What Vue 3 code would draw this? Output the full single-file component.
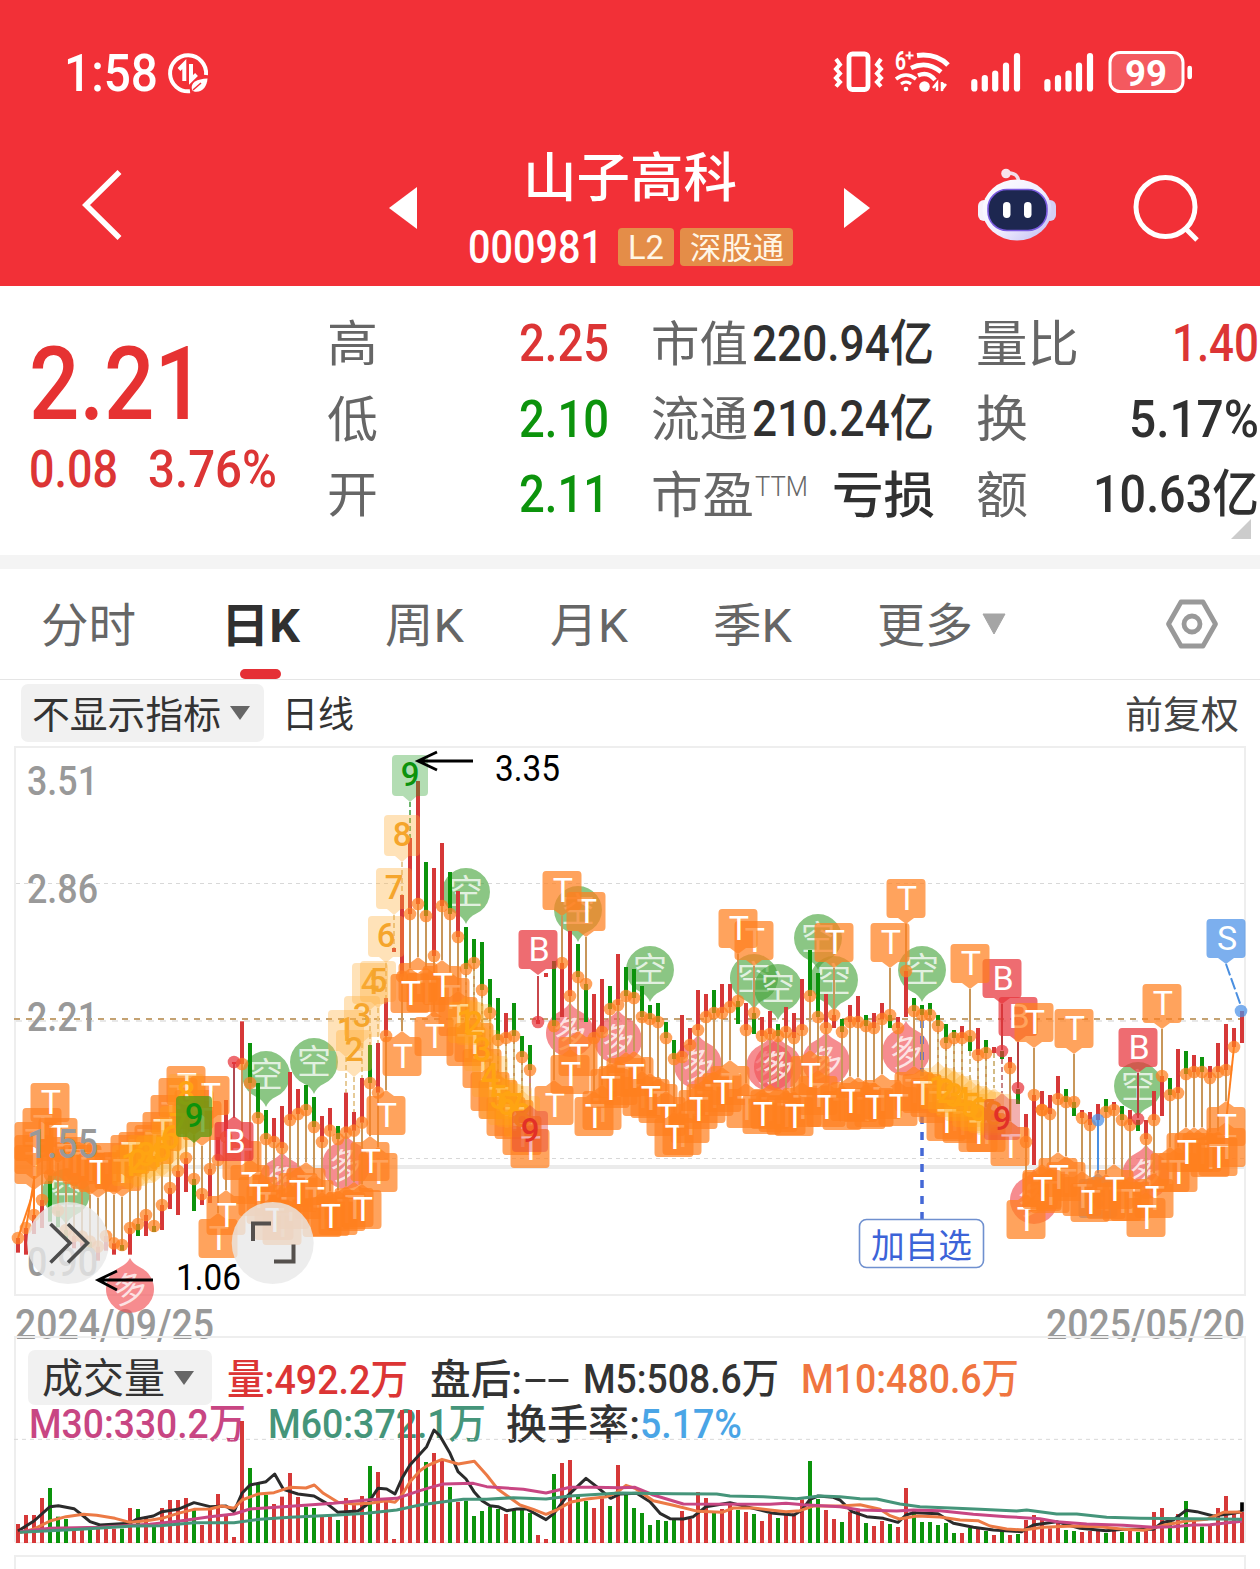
<template>
  <div class="page">
    <header class="header">
      <div class="status">
        <FitText t="1:58" :w="94" :s="51" class="medium" />
        <svg class="saver" width="40" height="40" viewBox="0 0 40 40" fill="none" stroke="#fff">
          <path d="M22 38.2A18 18 0 1 1 38 22" stroke-width="4" />
          <path d="M11 16.500L16.300 11V28M23 11V27L28.500 21.500" stroke-width="4" />
          <path d="M24 37C22 29 29 26 39.5 25.5C39 34 34 40 26 38.5Z" fill="#fff" stroke="none" />
          <path d="M25 37L33 30" stroke="#f23037" stroke-width="1.500" />
        </svg>
        <svg class="signals" width="360" height="46" viewBox="834 49 360 46" fill="none" stroke="#fff">
          <rect x="849" y="54" width="19" height="35.500" rx="3.500" stroke-width="4.800" />
          <path d="M836 59l4 5.500-4 4.500 4 4.500-4 4.500 4 4-4 4.500M881 59l-4 5.500 4 4.500-4 4.500 4 4.500-4 4 4 4.500" stroke-width="4" />
          <text x="895" y="70" font-size="26" font-weight="700" fill="#fff" stroke="none" textLength="11" lengthAdjust="spacingAndGlyphs">6</text>
          <path d="M905.500 55.500h8M909.500 51.500v8" stroke-width="2.200" />
          <path d="M917 55.500Q936 53 948 65" stroke-width="5" />
          <path d="M911 68Q927 60 941 72" stroke-width="4.600" />
          <path d="M918 75.500Q928 71 935 80" stroke-width="4.200" />
          <path d="M896 79Q906 71 916 79" stroke-width="3.600" />
          <path d="M901 84Q906 80 911 84" stroke-width="3" />
          <circle cx="906" cy="89" r="2.300" fill="#fff" stroke="none" />
          <circle cx="924.500" cy="86.500" r="5.300" fill="#fff" stroke="none" />
          <path d="M933 88l4-5v8M942 91v-9M943 83v5l3-4" stroke-width="2.500" />
          <path
            v-for="(b, n) in signalBars" :key="n"
            :d="`M${b[0]} ${b[1]}V88.500`" stroke-width="6.200" stroke-linecap="round"
          />
          <rect x="1110" y="52.500" width="73" height="39" rx="10" fill="#ffffff" fill-opacity=".2" stroke-width="3" />
          <path d="M1189.700 68v9" stroke-width="4.600" stroke-linecap="round" />
          <text x="1125" y="85.500" font-size="37" font-weight="700" fill="#fff" stroke="none" textLength="42" lengthAdjust="spacingAndGlyphs">99</text>
        </svg>
      </div>
      <nav class="nav">
        <svg class="back" width="40" height="72" viewBox="0 0 40 72">
          <path d="M38.500 3L5 36L38.500 69" fill="none" stroke="#fff" stroke-width="5.600" />
        </svg>
        <svg class="prev" width="28" height="42" viewBox="0 0 28 42"><path d="M28 0V42L0 21Z" fill="#fff" /></svg>
        <div class="stock">
          <FitText t="山子高科" :w="212" :s="53" class="medium" />
          <div class="code">
            <FitText t="000981" :w="135" :s="46" class="medium" />
            <span class="badge l2"><FitText t="L2" :w="36" :s="34" /></span>
            <span class="badge sgt"><FitText t="深股通" :w="92" :s="31" /></span>
          </div>
        </div>
        <svg class="next" width="27" height="42" viewBox="0 0 27 42"><path d="M0 1V41L26 21Z" fill="#fff" /></svg>
        <svg class="robot" width="80" height="74" viewBox="0 0 80 74">
          <defs>
            <linearGradient id="head" x1="0" y1="0" x2="1" y2="1">
              <stop offset="0" stop-color="#fff" />
              <stop offset=".55" stop-color="#f0edff" />
              <stop offset="1" stop-color="#bcb8f2" />
            </linearGradient>
          </defs>
          <path d="M30 5Q41 4 42 15" fill="none" stroke="#f1dcea" stroke-width="3.500" />
          <circle cx="29" cy="5.500" r="4.800" fill="#f8e3ec" />
          <rect x="1" y="32" width="12" height="21" rx="6" fill="#f5f0fb" />
          <rect x="67" y="32" width="12" height="21" rx="6" fill="#d4cff5" />
          <ellipse cx="40" cy="42" rx="34.500" ry="30.500" fill="url(#head)" />
          <rect x="11" y="21.500" width="59" height="41" rx="19" fill="#1d2750" stroke="#7b5be0" stroke-width="1.600" />
          <rect x="26" y="34" width="7.500" height="16" rx="3.700" fill="#fff" />
          <rect x="47" y="34" width="7.500" height="16" rx="3.700" fill="#fff" />
        </svg>
        <svg class="search" width="68" height="68" viewBox="0 0 68 68" fill="none" stroke="#fff" stroke-width="5">
          <circle cx="33.500" cy="33" r="29.500" />
          <path d="M54 55L65 66" />
        </svg>
      </nav>
    </header>

    <section class="quote">
      <div class="price">
        <FitText t="2.21" :w="176" :s="102" class="medium last" />
        <div class="change">
          <FitText t="0.08" :w="89" :s="51" class="medium" />
          <FitText t="3.76%" :w="129" :s="51" class="medium" />
        </div>
      </div>
      <div class="col c1">
        <div v-for="r in col1" :key="r.k" class="row">
          <FitText :t="r.k" :w="49" :s="49" class="label" />
          <FitText :t="r.v" :w="90" :s="51" class="medium" :class="r.c" />
        </div>
      </div>
      <div class="col c2">
        <div class="row"><FitText t="市值" :w="95" :s="48" class="label" /><FitText t="220.94亿" :w="182" :s="50" class="medium dark" /></div>
        <div class="row"><FitText t="流通" :w="95" :s="48" class="label" /><FitText t="210.24亿" :w="182" :s="50" class="medium dark" /></div>
        <div class="row">
          <span class="pe"><FitText t="市盈" :w="101" :s="50" class="label" /><FitText t="TTM" :w="53" :s="27" class="ttm" /></span>
          <FitText t="亏损" :w="101" :s="50" class="medium dark" />
        </div>
      </div>
      <div class="col c3">
        <div class="row"><FitText t="量比" :w="101" :s="50" class="label" /><FitText t="1.40" :w="87" :s="51" class="medium red" /></div>
        <div class="row"><FitText t="换" :w="50" :s="50" class="label" /><FitText t="5.17%" :w="130" :s="51" class="medium dark" /></div>
        <div class="row"><FitText t="额" :w="50" :s="50" class="label" /><FitText t="10.63亿" :w="166" :s="51" class="medium dark" /></div>
      </div>
      <svg class="corner" width="20" height="20"><path d="M20 0V20H0Z" fill="#ccc" /></svg>
    </section>

    <nav class="tabs">
      <div v-for="tab in tabs" :key="tab.t" class="tab" :class="{ active: tab.on }">
        <FitText :t="tab.t" :w="tab.w" :s="47" />
      </div>
      <svg class="more" width="24" height="21"><path d="M1 0H23L12 20Z" fill="#a5a5a5" stroke="#a5a5a5" stroke-linejoin="round" /></svg>
      <svg class="setting" width="52" height="50" viewBox="0 0 52 50" fill="none" stroke="#999" stroke-width="4.800" stroke-linejoin="round">
        <path d="M15 3H37L49.500 25L37 47H15L2.500 25Z" />
        <circle cx="26" cy="25" r="8" />
      </svg>
    </nav>

    <div class="toolbar">
      <div class="pill">
        <FitText t="不显示指标" :w="187" :s="37.500" />
        <svg width="20" height="14"><path d="M0 0H20L10 14Z" fill="#666" /></svg>
      </div>
      <FitText t="日线" :w="70" :s="37" class="period" />
      <FitText t="前复权" :w="112" :s="38" class="adjust" />
    </div>

    <svg class="kline" width="1260" height="549" viewBox="0 746 1260 549">
      <path d="M15 1295V747H1245V1295Z" fill="none" stroke="#eee" stroke-width="2" />
      <path d="M16 883.500H1244M16 1158.500H1244" stroke="#d8d8d8" stroke-dasharray="4 4" />
      <path d="M16 1167H1244" stroke="#ebebeb" stroke-width="4" />
      <path d="M16 1021H1244" stroke="#e8e8e8" stroke-width="2" stroke-dasharray="6 6" />
      <path d="M14 1019H1244" stroke="#c4a272" stroke-width="2" stroke-dasharray="6 6" />

      <g v-for="(p, n) in pins" :key="'p' + n" :transform="`translate(${p[1]} ${p[2]})`">
        <g v-if="p[0] === 'down'">
          <path d="M-10 21.800Q-3 25 0 32Q3 25 10 21.800A24 24 0 1 0 -10 21.800Z" fill="#43a338" fill-opacity=".62" />
          <text y="12" class="pin">空</text>
        </g>
        <g v-else>
          <path d="M-10 -21.800Q-3 -25 0 -31Q3 -25 10 -21.800A24 24 0 1 1 -10 -21.800Z" fill="#f2555a" fill-opacity=".68" />
          <text y="12" class="pin" transform="rotate(-14)">多</text>
        </g>
      </g>

      <path d="M922 1020V1219" stroke="#4468d6" stroke-width="3.500" stroke-dasharray="8 8" />

      <path v-for="(s, n) in stems" :key="'s' + n" :d="s.d" :stroke="s.c" stroke-width="2" :stroke-dasharray="s.dash" />
      <path v-for="(c, n) in candles" :key="'c' + n" :d="`M${c.x} ${c.hi}V${c.lo}`" :stroke="c.color" stroke-width="4" />
      <circle v-for="(d, n) in dots" :key="'d' + n" :cx="d.x" :cy="d.y" r="6.300" :fill="d.c" fill-opacity=".72" />

      <g v-for="(m, n) in numbers" :key="'n' + n" :transform="`translate(${xOf(m.i)} ${m.y})`">
        <path :d="m.up ? countDown : countUp" :fill="m.fill" :fill-opacity="m.o" />
        <text y="31" class="count" :fill="m.ink">{{ m.t }}</text>
      </g>
      <g v-for="(m, n) in tags" :key="'t' + n" :transform="`translate(${m.x} ${m.y})`">
        <path :d="m.up ? tagDown : tagUp" :fill="m.fill" fill-opacity=".72" />
        <text x="1" y="31" class="tag">{{ m.t }}</text>
      </g>
      <g v-for="(m, n) in lateNumbers" :key="'l' + n" :transform="`translate(${xOf(m.i)} ${m.y})`">
        <path :d="m.up ? countDown : countUp" :fill="m.fill" :fill-opacity="m.o" />
        <text y="31" class="count" :fill="m.ink">{{ m.t }}</text>
      </g>

      <text
        v-for="a in axis" :key="a.t" x="27" :y="a.y + 14.300" class="axis"
        textLength="71" lengthAdjust="spacingAndGlyphs"
      >{{ a.t }}</text>

      <path d="M473 761H419M437 752L418 761L437 770" fill="none" stroke="#000" stroke-width="2.800" />
      <text x="495" y="781" class="mark" textLength="65" lengthAdjust="spacingAndGlyphs">3.35</text>
      <text x="176" y="1290" class="mark" textLength="65" lengthAdjust="spacingAndGlyphs">1.06</text>

      <rect x="859.500" y="1219.500" width="124" height="48" rx="7" fill="#fff" stroke="#6f90cf" stroke-width="1.600" />
      <text x="871" y="1257.500" class="watch" textLength="101" lengthAdjust="spacingAndGlyphs">加自选</text>

      <circle cx="68" cy="1243" r="41" fill="#e9e9e9" fill-opacity=".8" />
      <path d="M50.500 1224L70 1243L50.500 1262.500M68 1224L87.500 1243L68 1262.500" fill="none" stroke="#4d4d4d" stroke-width="3.600" />
      <circle cx="272.700" cy="1243" r="41" fill="#e9e9e9" fill-opacity=".8" />
      <path d="M253 1241V1223.500H271M293.500 1244.500V1261.500H274" fill="none" stroke="#55504d" stroke-width="4" />
      <path d="M153 1280H99M117 1271L98 1280L117 1290" fill="none" stroke="#000" stroke-width="2.800" />
    </svg>

    <div class="dates">
      <FitText t="2024/09/25" :w="199" :s="42" />
      <FitText t="2025/05/20" :w="199" :s="42" />
    </div>

    <section class="volume">
      <div class="legend first">
        <div class="pill vol-pill">
          <FitText t="成交量" :w="121" :s="40.500" />
          <svg width="20" height="14"><path d="M0 0H20L10 14Z" fill="#666" /></svg>
        </div>
        <FitText t="量:492.2万" :w="181" :s="41" class="medium red" />
        <FitText t="盘后:" :w="92" :s="41" class="after medium" />
        <FitText t="--" :w="46" :s="41" class="empty" />
        <FitText t="M5:508.6万" :w="196" :s="41" class="medium m5" />
        <FitText t="M10:480.6万" :w="218" :s="41" class="medium m10" />
      </div>
      <div class="legend second">
        <FitText t="M30:330.2万" :w="217" :s="41" class="medium m30" />
        <FitText t="M60:372.1万" :w="218" :s="41" class="medium m60" />
        <FitText t="换手率:" :w="134" :s="41" class="rate medium" />
        <FitText t="5.17%" :w="102" :s="41" class="medium pct" />
      </div>
      <svg class="bars" width="1260" height="239" viewBox="0 0 3780 717">
        <path d="M42 21H3738M45 21V636M3735 21V636M42 678H3738M45 678V717M3735 678V717" stroke="#eee" stroke-width="6" fill="none" />
        <path d="M42 328H3735" stroke="#d8d8d8" stroke-width="3" stroke-dasharray="12 12" />
        <path d="M45 638H3735" stroke="#f6e6e4" stroke-width="4" />
        <path v-for="(v, n) in volumes" :key="n" :d="`M${54 + 24 * n} ${v.top}V639`" :stroke="v.color" stroke-width="12" />
        <polyline v-for="l in averages" :key="l.c" :points="l.p" fill="none" :stroke="l.c" stroke-width="9" stroke-linejoin="round" />
        <path d="M3726 517V545" stroke="#000" stroke-width="11" />
      </svg>
    </section>
  </div>
</template>

<script setup>
import { h } from 'vue'

const RED = '#d63838'
const GREEN = '#0c930c'
const ORANGE = '#ff7f1e'

// 文字按指定宽度排布, 中文开头的略微下移并抵消字形留白
const FitText = (props) => {
  const cjk = /^[\u4e00-\u9fff]/.test(props.t)
  const pure = /^[\u4e00-\u9fff]+$/.test(props.t)
  return h('svg', { width: props.w, height: props.s, viewBox: `0 0 ${props.w} ${props.s}`, class: 'fit' }, [
    h('text', {
      x: pure ? -1 : 0,
      y: props.s * (cjk ? 0.87 : 0.855),
      'font-size': props.s,
      fill: 'currentColor',
      textLength: props.w + (pure ? 2 : 0),
      lengthAdjust: 'spacingAndGlyphs'
    }, props.t)
  ])
}
FitText.props = ['t', 'w', 's']

const signalBars = [
  [974.3, 82], [984.8, 78], [995.2, 73.5], [1006, 65.5], [1017, 56],
  [1047.4, 82], [1058, 78], [1068.5, 73.5], [1079, 65.5], [1090, 56]
]

const col1 = [
  { k: '高', v: '2.25', c: 'red' },
  { k: '低', v: '2.10', c: 'green' },
  { k: '开', v: '2.11', c: 'green' }
]

const tabs = [
  { t: '分时', w: 93 },
  { t: '日K', w: 79, on: true },
  { t: '周K', w: 79 },
  { t: '月K', w: 78 },
  { t: '季K', w: 79 },
  { t: '更多', w: 94 }
]

const axis = [
  { t: '3.51', y: 780.5 },
  { t: '2.86', y: 888.5 },
  { t: '2.21', y: 1016.5 },
  { t: '1.55', y: 1143.5 },
  { t: '0.90', y: 1262 }
]

// 气泡方框, 尖角朝下/朝上
const tagDown = 'M-16 0H16Q19.500 0 19.500 4V35Q19.500 39 16 39H8L0 45L-8 39H-16Q-19.500 39 -19.500 35V4Q-19.500 0 -16 0Z'
const tagUp = 'M-16 0H-8L0 -6L8 0H16Q19.500 0 19.500 4V35Q19.500 39 16 39H-16Q-19.500 39 -19.500 35V4Q-19.500 0 -16 0Z'
const countDown = 'M-14 0H14Q18 0 18 4V37Q18 41 14 41H7L0 47L-7 41H-14Q-18 41 -18 37V4Q-18 0 -14 0Z'
const countUp = 'M-14 0H-7L0 -6L7 0H14Q18 0 18 4V37Q18 41 14 41H-14Q-18 41 -18 37V4Q-18 0 -14 0Z'

const xOf = (i) => 18 + 8 * i
const colorOf = (s) => (s[0] === 'r' ? RED : GREEN)

// 每根K线: 颜色 + 高_低, 以三分之一像素为单位
const seg = (base, text) =>
  text.trim().split(/\s+/).map((s) => {
    const [hi, lo] = s.slice(1).split('_').map(Number)
    return { color: colorOf(s), hi: base + hi / 3, lo: base + lo / 3 }
  })

const candles = [
  ...seg(1030, `r624_668 r594_674 r555_612 r510_594 g435_575 g542_592 g600_630 r618_655 r620_650 g635_660
    r650_692 r618_662 r640_674 g645_662 r594_674 g582_618 r555_618 g588_606 r525_600 r474_537
    r423_555 r384_486 g447_543 r492_525 r417_519 r321_390 r210_321 r96_102 r-26_102 g39_159
    g159_264 g240_327 r264_336 r228_354 r126_270 r177_252 g165_240 g201_291 r258_336`),
  ...seg(740, `r1104_1172 g1158_1197 r1058_1178 r1116_1172 r1014_1148 g915_1029 r909_1058 r774_888 r624_636
    r465_710 r294_522 r123_492 g366_528 r384_648 r309_498 g396_522 r453_591 g561_687 g597_669
    g606_750 g717_819 g774_900 r819_894 g789_888 g888_951 g915_990 r840_852 r699_711 g663_858
    r669_831 r573_768 g612_711 g732_846 r762_894 r717_876 g738_807 r642_795 g681_768`),
  ...seg(860, `g327_414 g378_471 g435_477 g429_486 g486_534 g540_597 r465_591 r504_555 r390_510 r402_471
    g390_459 r372_459 r372_441 g423_492 r429_510 g459_522 r471_528 r453_522 g492_528 r441_516
    r459_534 r357_510 g270_408 g339_471 r402_504 r465_504 g477_516 r435_486 r408_486 g465_498
    r459_504 r429_477 g465_504 r471_504 r333_471 g414_453 g435_465 g429_465 g465_498 g492_549
    g510_534 r498_534 g528_573 r504_585 g540_579 r561_579 g573_597 r591_624 g687_732 r762_846
    r705_915 r693_750 r705_762 r648_717 g687_726 g726_768 r750_774 r756_795 r732_780 g717_756
    r726_750 g738_780 r750_795 g780_813 r780_837 r693_780 r648_768 g654_705 r567_699 g573_642
    r585_636 g591_636 r618_654 r549_636 r492_630 r504_561 r453_549`)
].map((c, i) => ({ ...c, x: xOf(i) }))

// 标记: [K线序号, 方框顶部]
const above = [
  [0, 1145], [1, 1135], [2, 1122], [3, 1108], [5, 1118], [6, 1137], [7, 1142], [8, 1145], [9, 1150],
  [11, 1143], [12, 1150], [15, 1132], [16, 1122], [17, 1125], [19, 1095], [20, 1078], [22, 1090], [23, 1101],
  [4, 1083], [10, 1153], [13, 1152], [14, 1135], [18, 1112], [21, 1066], [24, 1076],
  [71, 892], [68, 871], [92, 921], [90, 909], [102, 923], [109, 923], [111, 879], [119, 944],
  [127, 1003], [132, 1009], [143, 984]
]
const below = [
  [28, 1141], [29, 1165], [31, 1185], [33, 1206], [34, 1190], [36, 1168], [37, 1180], [38, 1198], [40, 1196],
  [41, 1192], [42, 1188], [45, 1153], [50, 963], [51, 973], [54, 978], [55, 997], [56, 1027], [58, 1049],
  [59, 1072], [60, 1080], [61, 1097], [62, 1100], [63, 1116], [64, 1129], [73, 1091], [75, 1066], [76, 1058],
  [78, 1077], [80, 1084], [83, 1116], [84, 1104], [86, 1084], [87, 1077], [89, 1066], [91, 1089], [94, 1090],
  [95, 1093], [96, 1096], [98, 1088], [100, 1076], [103, 1091], [105, 1083], [106, 1090], [108, 1080],
  [112, 1072], [114, 1078], [115, 1084], [117, 1100], [118, 1104], [121, 1113], [128, 1172], [131, 1162],
  [133, 1177], [136, 1180], [138, 1182], [139, 1182], [144, 1153], [147, 1133], [148, 1133],
  [149, 1138], [152, 1128],
  [25, 1219], [26, 1196], [30, 1177], [32, 1201], [35, 1173], [39, 1197], [43, 1190], [44, 1142], [46, 1096],
  [48, 1037], [49, 974], [53, 966], [52, 1017], [57, 1023], [67, 1086], [70, 1037], [69, 1055], [72, 1097],
  [74, 1069], [77, 1057], [79, 1079], [81, 1097], [82, 1118], [85, 1090], [88, 1073], [93, 1095], [97, 1097],
  [99, 1056], [101, 1088], [104, 1082], [107, 1088], [110, 1087], [113, 1074], [116, 1102], [120, 1113],
  [124, 1127], [126, 1200], [129, 1174], [130, 1158], [128, 1170], [134, 1183], [137, 1170], [142, 1179],
  [141, 1198], [145, 1153], [146, 1133], [150, 1137], [151, 1107]
]
const clamp = (x) => Math.min(1226, Math.max(34, x))
const tags = [
  { x: 234, y: 1122, t: 'B', fill: '#e8333a', up: false },
  { x: 538, y: 930, t: 'B', fill: '#e8333a', up: true },
  { x: 1002, y: 959, t: 'B', fill: '#e8333a', up: true },
  { x: 1018, y: 997, t: 'B', fill: '#e8333a', up: true },
  { x: 1138, y: 1028, t: 'B', fill: '#e8333a', up: true },
  { x: 1226, y: 919, t: 'S', fill: '#4a90e8', up: true },
  { x: 1098, y: 1179, t: 'S', fill: '#4a90e8', up: false },
  ...above.map(([i, y]) => ({ x: clamp(xOf(i)), y, t: 'T', fill: ORANGE, up: true })),
  ...below.map(([i, y]) => ({ x: clamp(xOf(i)), y, t: 'T', fill: ORANGE, up: false }))
]
// 红色B盖在橙色方框上面
tags.push(tags.shift())

const run = (start, up, ys, soft) =>
  ys.map((y, n) => {
    const last = n === 8
    return {
      i: start + n,
      y,
      up,
      t: n + 1,
      fill: last ? (up ? '#2ca02c' : '#e03a3a') : soft ? '#ffa512' : '#ffb03a',
      o: last ? (up ? 0.36 : 0.4) : soft ? 0.28 : 0.36,
      ink: last ? (up ? '#0c930c' : '#e23028') : soft ? '#ffa412' : '#f5a52c'
    }
  })
const numbers = run(41, true, [1010, 1030, 996, 963, 961, 916, 868, 815, 755])
const left = run(14, true, [1145, 1142, 1135, 1136, 1130, 1118, 1106, 1074, 1096], true)
left[8].o = 0.75
left[8].fill = '#5a9a10'
const lateNumbers = [
  ...left,
  ...run(56, false, [1002, 1004, 1030, 1056, 1078, 1084, 1086, 1096, 1111], true),
  ...run(115, false, [1068, 1072, 1076, 1080, 1086, 1090, 1092, 1094, 1099], true)
]

const brown = '#c8975a'
const stems = [
  ...above.map(([i, y]) => ({ d: `M${clamp(xOf(i))} ${y + 45}L${xOf(i)} ${candles[i].hi}`, c: i < 3 ? ORANGE : brown })),
  ...below.map(([i, y]) => ({ d: `M${xOf(i)} ${candles[i].lo}L${clamp(xOf(i))} ${y - 6}`, c: i === 152 ? ORANGE : brown })),
  ...numbers.map((m) => ({ d: `M${xOf(m.i)} ${m.y + 47}V${candles[m.i].hi}`, c: m.t === 9 ? '#6bb56b' : '#e6cb98', dash: '5 3' })),
  ...lateNumbers.slice(9).map((m) => ({ d: `M${xOf(m.i)} ${candles[m.i].lo}V${m.y - 6}`, c: m.t === 9 ? '#c98585' : '#d3bb85', dash: '5 3' })),
  { d: 'M234 1062V1118', c: '#b04a52' },
  { d: 'M538 976V1022', c: '#c9474c' },
  { d: 'M1002 1004V1050', c: '#b5403f' },
  { d: 'M1018 1042V1088', c: '#b5403f' },
  { d: 'M1138 1073V1118', c: '#b5403f' },
  { d: 'M1098 1120V1173', c: '#4a8fe0' },
  { d: 'M1226 964L1241 1006', c: '#4a8fe0', dash: '12 3' }
]

const dots = [
  ...above.map(([i]) => ({ x: xOf(i), y: candles[i].hi, c: ORANGE })),
  ...below.map(([i]) => ({ x: xOf(i), y: candles[i].lo, c: ORANGE })),
  { x: 234, y: 1062, c: '#e8333a' },
  { x: 538, y: 1022, c: '#e8333a' },
  { x: 1002, y: 1051, c: '#e8333a' },
  { x: 1018, y: 1088, c: '#e8333a' },
  { x: 1138, y: 1119, c: '#e8333a' },
  { x: 1098, y: 1120, c: '#4a90e8' },
  { x: 1241, y: 1011, c: '#4a90e8' }
]

const pins = [
  ['down', 66, 1193], ['down', 266, 1075], ['down', 314, 1062], ['down', 466, 892], ['down', 578, 910],
  ['down', 650, 970], ['down', 754, 978], ['down', 778, 988], ['down', 818, 938], ['down', 834, 980],
  ['down', 922, 970], ['down', 1138, 1086],
  ['up', 130, 1289], ['up', 282, 1182], ['up', 346, 1165], ['up', 570, 1033], ['up', 618, 1040],
  ['up', 698, 1065], ['up', 770, 1067], ['up', 778, 1067], ['up', 826, 1062], ['up', 906, 1052],
  ['up', 1034, 1200], ['up', 1146, 1175]
]

const volumes = `r582 r555 r555 r504 g474 g560 g567 r598 r598 g600 r596 r596 r596 g596 r534 g537 r560 g590 r534 r510
  r510 r504 g540 r585 r540 r492 r555 r621 r273 g414 g460 g495 r522 r500 r429 r501 g530 g534 r560 r560
  g570 r504 r522 r498 g408 r426 r510 r627 r240 r240 r240 g396 r369 r390 g471 r516 g512 g558 g543 g530
  g537 r552 g540 g540 g549 r615 r627 g432 r399 r390 g498 g513 r534 r505 g528 r405 g490 g534 g549 g585
  g570 g573 g567 r543 r567 r486 r504 g543 r537 r516 g540 r546 g552 r573 r552 g564 r550 r550 r508 g393
  g507 r540 r567 g576 r545 r543 g579 r588 r573 g582 r591 r474 g543 g576 g576 g585 g579 g609 r609 g594
  r594 g603 r615 g602 r615 g612 r570 r555 r567 r595 r576 g600 g603 r606 r603 r603 g609 r603 g606 r603
  g606 r603 r546 r534 g572 r552 g513 r570 g590 r588 r534 r498 r546 r546`
  .split(/\s+/)
  .map((s) => ({ color: colorOf(s), top: Number(s.slice(1)) }))

// 均线分三段, 每段宽1260
const join = (...parts) =>
  parts.map((p, n) => p.split(' ').map((s) => {
    const [x, y] = s.split(',').map(Number)
    return `${x + 1260 * n},${y}`
  }).join(' ')).join(' ')

const averages = [
  {
    c: '#2b2b2b',
    p: join(
      '54,603 102,573 150,530 175,527 222,536 250,558 270,575 300,585 390,580 410,568 460,558 486,545 534,538 582,518 630,530 678,528 702,545 726,490 750,465 798,455 824,432 850,478 894,492 942,498 980,520 1014,547 1074,543 1100,525 1134,475 1160,477 1185,492 1206,445 1230,405',
      '0,372 20,350 42,300 60,318 90,370 114,425 138,447 162,485 186,512 210,527 234,530 260,542 290,537 320,537 378,569 402,550 440,500 498,445 530,470 572,505 600,492 650,490 690,515 720,550 750,566 790,567 820,560 858,530 930,518 1000,535 1060,550 1122,555 1146,540 1170,508 1194,498 1240,502',
      '0,510 36,545 80,560 130,565 174,577 198,555 222,548 294,551 340,580 400,592 460,600 545,605 580,585 650,575 720,595 798,602 850,598 940,598 966,578 1000,570 1038,541 1070,545 1120,558 1160,553 1206,545'
    )
  },
  {
    c: '#ec7a45',
    p: join(
      '60,608 102,597 150,573 198,560 250,553 290,556 345,565 390,577 440,572 486,565 534,550 582,538 630,537 665,528 702,535 726,510 774,492 822,488 870,472 918,474 943,465 970,490 1014,517 1062,522 1110,520 1158,512 1185,517 1206,495 1230,455',
      '0,422 20,408 66,388 115,402 163,394 200,435 234,478 300,525 340,538 378,553 410,540 450,517 500,507 560,500 590,488 618,466 645,475 700,512 760,526 834,544 906,547 940,534 1000,534 1050,540 1098,545 1140,542 1180,528',
      '0,528 60,524 120,538 150,557 178,567 230,558 300,561 360,570 414,572 450,588 500,597 550,600 610,592 700,588 780,590 850,598 910,601 970,586 1040,573 1100,568 1150,547 1206,546'
    )
  },
  {
    c: '#c84683',
    p: join(
      '60,605 150,595 300,592 450,583 540,573 630,560 702,552 750,537 850,530 1000,520 1100,510 1190,505',
      '0,482 40,470 70,462 160,460 200,470 310,478 378,489 450,472 520,472 600,473 645,472 700,495 790,522 1050,523 1098,520 1150,524',
      '0,530 60,540 170,543 220,540 300,542 400,553 500,560 600,566 650,575 740,582 850,586 940,592 1000,590 1060,585 1110,584 1206,574'
    )
  },
  {
    c: '#45957a',
    p: join(
      '60,607 240,598 400,588 480,587 582,578 702,578 780,568 870,562 1000,556 1100,550 1190,540',
      '0,525 60,517 130,508 200,508 280,503 378,507 450,498 600,489 760,491 890,492 930,498 1030,500 1130,506 1200,498',
      '0,500 60,506 110,507 180,522 240,530 350,535 420,538 530,543 560,540 650,552 710,552 800,562 900,565 1206,568'
    )
  }
]
</script>

<style>
body {
  margin: 0;
  background: #fff;
}
</style>

<style scoped>
.page {
  width: 1260px;
  height: 1569px;
  overflow: hidden;
  background: #fff;
  color: #333;
  font-family: Roboto, "Noto Sans CJK SC", sans-serif;
}

svg {
  display: block;
  flex-shrink: 0;
  overflow: visible;
}

.medium {
  font-weight: 500;
}

.red {
  color: #dc3535;
}

.green {
  color: #0c930c;
}

.dark {
  color: #303030;
}

.label {
  color: #666;
}

.header {
  height: 286px;
  background: #f23037;
  color: #fff;
}

.status {
  display: flex;
  align-items: center;
  height: 145px;
  padding-left: 64px;
}

.saver {
  margin-left: 10px;
}

.signals {
  margin: -1px 0 0 626px;
}

.nav {
  display: flex;
  height: 141px;
}

.back {
  margin: 24px 0 0 81px;
}

.prev {
  margin: 42px 0 0 268px;
}

.stock {
  width: 326px;
  margin: 6px 0 0 51px;
}

.stock > .fit {
  margin-left: 56px;
}

.code {
  display: flex;
  align-items: center;
  height: 38px;
  margin-top: 24px;
}

.badge {
  display: flex;
  align-items: center;
  justify-content: center;
  height: 38px;
  border-radius: 4px;
  background: #e48d48;
  color: #fff6e6;
}

.l2 {
  width: 56px;
  margin-left: 15px;
}

.sgt {
  width: 113px;
  margin-left: 6px;
}

.next {
  margin: 42px 0 0 50px;
}

.robot {
  margin: 23px 0 0 106px;
}

.search {
  margin: 29px 0 0 75px;
}

.quote {
  position: relative;
  display: flex;
  height: 269px;
  border-bottom: 14px solid #f4f4f4;
}

.price {
  width: 328px;
  padding: 46px 0 0 29px;
  box-sizing: border-box;
  color: #dc3535;
}

.last {
  color: #e63232;
}

.change {
  display: flex;
  gap: 30px;
  margin-top: 9px;
}

.col {
  display: flex;
  flex-direction: column;
  padding-top: 19px;
}

.row {
  display: flex;
  align-items: center;
  justify-content: space-between;
  height: 75.5px;
}

.c1 {
  width: 281px;
}

.c2 {
  width: 282px;
  margin-left: 43px;
}

.c3 {
  width: 282px;
  margin-left: 43px;
}

.pe {
  display: flex;
  gap: 2px;
}

.ttm {
  margin-top: 4px;
  color: #666;
  font-weight: 300;
}

.corner {
  position: absolute;
  right: 9px;
  bottom: 16px;
}

.tabs {
  display: flex;
  align-items: center;
  gap: 85.5px;
  height: 110px;
  padding-left: 42px;
  border-bottom: 1px solid #e5e5e5;
  color: #666;
}

.tab {
  position: relative;
}

.active {
  color: #303030;
  font-weight: 700;
}

.active::after {
  content: "";
  position: absolute;
  left: 19px;
  top: 68px;
  width: 41px;
  height: 10px;
  border-radius: 5px;
  background: #e53036;
}

.more {
  margin-left: -75px;
}

.setting {
  margin-left: 74px;
}

.toolbar {
  display: flex;
  align-items: center;
  height: 66px;
}

.toolbar .fit {
  margin-top: 2px;
}

.pill {
  display: flex;
  align-items: center;
  gap: 10px;
  width: 243px;
  height: 58px;
  margin-left: 21px;
  padding-left: 12px;
  box-sizing: border-box;
  border-radius: 7px;
  background: #f1f1f1;
}

.period {
  margin-left: 19px;
}

.adjust {
  margin-left: auto;
  margin-right: 22px;
  color: #444;
}

.pin {
  fill: #fff;
  fill-opacity: .75;
  font-size: 34px;
  text-anchor: middle;
}

.tag {
  fill: #fff;
  font-size: 34px;
  text-anchor: middle;
}

.count {
  font-size: 33px;
  font-weight: 500;
  text-anchor: middle;
}

.axis {
  fill: #999;
  font-size: 41px;
  font-weight: 500;
}

.mark {
  fill: #000;
  font-size: 36px;
}

.watch {
  fill: #3c63d8;
  font-size: 34px;
}

.kline {
  position: relative;
}

.dates {
  display: flex;
  justify-content: space-between;
  height: 35px;
  padding: 8px 15px 0 15px;
  box-sizing: border-box;
  color: #999;
  font-weight: 500;
}

.volume {
  position: relative;
  height: 239px;
}

.bars {
  position: absolute;
  left: 0;
  top: 0;
}

.legend {
  display: flex;
  align-items: center;
}

.first {
  height: 55px;
  padding-top: 20px;
}

.first .fit {
  margin-top: 2px;
}

.second {
  height: 41px;
  margin-top: -2px;
  padding-left: 29px;
}

.vol-pill {
  width: 184px;
  height: 55px;
  margin: 0 15px 0 28px;
  padding-left: 15px;
}

.after {
  margin-left: 22px;
}

.empty {
  margin-left: 2px;
}

.m5 {
  margin-left: 13px;
}

.m10 {
  margin-left: 22px;
  color: #f07540;
}

.m30 {
  color: #c84683;
}

.m60 {
  margin-left: 22px;
  color: #45957a;
}

.rate {
  margin-left: 20px;
}

.pct {
  color: #4aa5e6;
}
</style>
